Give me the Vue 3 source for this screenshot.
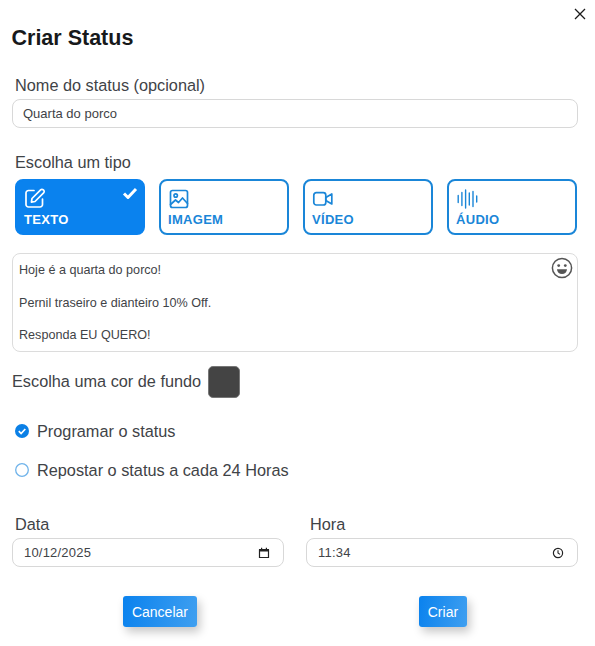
<template>
  <div class="dialog">
    <button class="close" type="button" aria-label="Fechar">
      <svg width="12" height="12" viewBox="0 0 12 12"><path d="M1 1l10 10M11 1L1 11" stroke="#1b1b1b" stroke-width="1.300" fill="none" /></svg>
    </button>
    <h1 class="title">Criar Status</h1>

    <label class="label name-label">Nome do status (opcional)</label>
    <input class="field name-field" type="text" v-model="name" />

    <label class="label type-label">Escolha um tipo</label>
    <div class="types">
      <button
        v-for="t in types"
        :key="t.id"
        type="button"
        class="type"
        :class="{ active: selected === t.id }"
        @click="selected = t.id"
      >
        <svg class="type-icon" width="24" height="24" viewBox="0 0 24 24" fill="none" stroke="currentColor" stroke-width="1.700" stroke-linecap="round" stroke-linejoin="round">
          <g v-if="t.id === 'texto'" transform="translate(-1 -1)">
            <path d="M11 4.500H5.500A2.500 2.500 0 0 0 3 7v11.500A2.500 2.500 0 0 0 5.500 21H17a2.500 2.500 0 0 0 2.500-2.500V13" />
            <path d="M9 12.500L17.600 3.900a1.900 1.900 0 0 1 2.700 0l.3.3a1.900 1.900 0 0 1 0 2.700L12 15.500l-3.600.7z" />
          </g>
          <g v-else-if="t.id === 'imagem'">
            <rect x="2.500" y="3.500" width="17" height="17" rx="2" />
            <circle cx="7.700" cy="8.500" r="1.700" />
            <path d="M2.500 17.500l5-4.500 3 2.500 4-4.500 5 5.500" />
          </g>
          <g v-else-if="t.id === 'video'">
            <rect x="1.800" y="5.700" width="12" height="12.300" rx="2.500" />
            <path d="M13.800 10.500l6-3.500v10l-6-3.500z" />
          </g>
          <g v-else stroke-width="1.400">
            <path d="M2.200 15.500v-7M5.900 18.500v-13M9.600 21V3M13.300 18v-12M17 19.500v-15M20.700 15v-6" transform="translate(0 0)" />
          </g>
        </svg>
        <svg v-if="selected === t.id" class="check" width="16" height="13" viewBox="0 0 16 13"><path d="M2 6.500l4 4 8-8.500" stroke="#fff" stroke-width="3" fill="none" stroke-linejoin="round" /></svg>
        <span class="type-name">{{ t.label }}</span>
      </button>
    </div>

    <div class="message">
      <textarea class="message-input" v-model="message"></textarea>
      <svg class="emoji" width="22" height="22" viewBox="0 0 22 22">
        <circle cx="11" cy="11" r="9.600" fill="none" stroke="#555" stroke-width="1.500" />
        <circle cx="7.700" cy="8.600" r="1.400" fill="#555" />
        <circle cx="14.300" cy="8.600" r="1.400" fill="#555" />
        <path d="M6 12.300h10a5 4.800 0 0 1-10 0z" fill="#555" />
      </svg>
    </div>

    <div class="color-row">
      <span class="color-label">Escolha uma cor de fundo</span>
      <span class="swatch"></span>
    </div>

    <div class="option first">
      <svg width="14" height="14" viewBox="0 0 14 14">
        <circle cx="7" cy="7" r="7" fill="#0b80e6" />
        <path d="M3.800 7.200l2.300 2.300 4.200-4.500" stroke="#fff" stroke-width="1.700" fill="none" />
      </svg>
      <span>Programar o status</span>
    </div>
    <div class="option second">
      <svg width="14" height="14" viewBox="0 0 14 14">
        <circle cx="7" cy="7" r="6.300" fill="#fff" stroke="#6fb3ea" stroke-width="1.300" />
      </svg>
      <span>Repostar o status a cada 24 Horas</span>
    </div>

    <div class="schedule">
      <div class="col">
        <label class="label">Data</label>
        <div class="field picker">
          <span>10/12/2025</span>
          <svg width="12" height="12" viewBox="0 0 12 12">
            <path d="M1.500 3h9v7.500h-9z" fill="none" stroke="#222" stroke-width="1.200" />
            <path d="M1 2h10v2.500H1zM3 .8h1.200V2H3zM7.800 .8H9V2H7.800z" fill="#222" />
          </svg>
        </div>
      </div>
      <div class="col">
        <label class="label hora-label">Hora</label>
        <div class="field picker">
          <span>11:34</span>
          <svg width="12" height="12" viewBox="0 0 12 12">
            <circle cx="6" cy="6" r="4.600" fill="none" stroke="#222" stroke-width="1.200" />
            <path d="M6 3.200V6l2 1.400" fill="none" stroke="#222" stroke-width="1.100" />
          </svg>
        </div>
      </div>
    </div>

    <div class="actions">
      <button type="button" class="btn">Cancelar</button>
      <button type="button" class="btn">Criar</button>
    </div>
  </div>
</template>

<script setup>
import { ref } from "vue";

const name = ref("Quarta do porco");
const selected = ref("texto");
const message = ref(
  "Hoje é a quarta do porco!\n\nPernil traseiro e dianteiro 10% Off.\n\nResponda EU QUERO!"
);

const types = [
  { id: "texto", label: "TEXTO" },
  { id: "imagem", label: "IMAGEM" },
  { id: "video", label: "VÍDEO" },
  { id: "audio", label: "ÁUDIO" },
];
</script>

<style>
html,
body {
  background: #fff;
}
</style>

<style scoped>
.dialog {
  position: relative;
  box-sizing: border-box;
  width: 595px;
  height: 646px;
  padding: 26px 17px 0 12px;
  background: #fff;
  font-family: "Liberation Sans", Arial, sans-serif;
  color: #3f4347;
  overflow: hidden;
}

.close {
  position: absolute;
  top: 8px;
  right: 9px;
  padding: 0;
  border: 0;
  background: none;
  line-height: 0;
}

.title {
  margin: 0 0 0 -0.500px;
  font-size: 21.500px;
  line-height: 24px;
  font-weight: 700;
  color: #17191b;
}

.label {
  display: block;
  padding-left: 3px;
  font-size: 16.300px;
  line-height: 18px;
  margin-bottom: 4px;
}

.name-label {
  margin-top: 26px;
  margin-bottom: 5px;
}

.type-label {
  margin-top: 25px;
  margin-bottom: 8px;
}

.hora-label {
  padding-left: 4px;
}

.field {
  display: block;
  box-sizing: border-box;
  width: 100%;
  height: 29px;
  padding: 0 10px;
  border: 1px solid #d8d8d8;
  border-radius: 8px;
  background: #fff;
  font: 13px "Liberation Sans", Arial, sans-serif;
  color: #3f4347;
  outline: none;
}

.types {
  display: flex;
  gap: 14px;
  padding: 0 1px 0 3px;
}

.type {
  position: relative;
  box-sizing: border-box;
  display: flex;
  flex-direction: column;
  align-items: flex-start;
  width: 130px;
  height: 56px;
  padding: 6px 7px 0;
  border: 2px solid #1a86d8;
  border-radius: 8px;
  background: #fff;
  color: #1a86d8;
  font-family: inherit;
}

.type.active {
  border-color: #0a82ee;
  background: #0a82ee;
  color: #fff;
}

.type-icon {
  display: block;
  margin-bottom: 1px;
}

.check {
  position: absolute;
  top: 6px;
  right: 5px;
}

.type-name {
  font-size: 13px;
  line-height: 15px;
  font-weight: 700;
  letter-spacing: 0.300px;
}

.message {
  position: relative;
  margin-top: 18px;
}

.message-input {
  display: block;
  box-sizing: border-box;
  width: 100%;
  height: 99px;
  padding: 8px 6px;
  border: 1px solid #dcdcdc;
  border-radius: 8px;
  resize: none;
  outline: none;
  font: 12.600px/16.250px "Liberation Sans", Arial, sans-serif;
  color: #3f4347;
  overflow: hidden;
}

.emoji {
  position: absolute;
  top: 4px;
  right: 5px;
}

.color-row {
  display: flex;
  align-items: center;
  gap: 7px;
  margin-top: 13px;
  height: 33px;
  font-size: 16.300px;
}

.swatch {
  box-sizing: border-box;
  width: 32px;
  height: 32px;
  border: 1px solid #777;
  border-radius: 5px;
  background: #444;
}

.option {
  display: flex;
  align-items: center;
  gap: 8px;
  padding-left: 3px;
  height: 20px;
  font-size: 16.300px;
}

.option.first {
  margin-top: 23px;
}

.option.second {
  margin-top: 19px;
}

.schedule {
  display: flex;
  gap: 22px;
  margin-top: 35px;
}

.col {
  flex: 1;
}

.col .label {
  margin-bottom: 5px;
}

.picker {
  display: flex;
  align-items: center;
  justify-content: space-between;
  padding: 0 13px 0 11px;
  letter-spacing: 0.200px;
}

.actions {
  display: flex;
  justify-content: space-around;
  margin-top: 29px;
}

.btn {
  height: 31px;
  padding: 0 9px;
  border: 0;
  border-radius: 3px;
  background: linear-gradient(100deg, #0a82ee, #3f9ff0);
  box-shadow: 3px 5px 10px rgba(0, 0, 0, 0.22);
  color: #fff;
  font: 14px "Liberation Sans", Arial, sans-serif;
}
</style>
